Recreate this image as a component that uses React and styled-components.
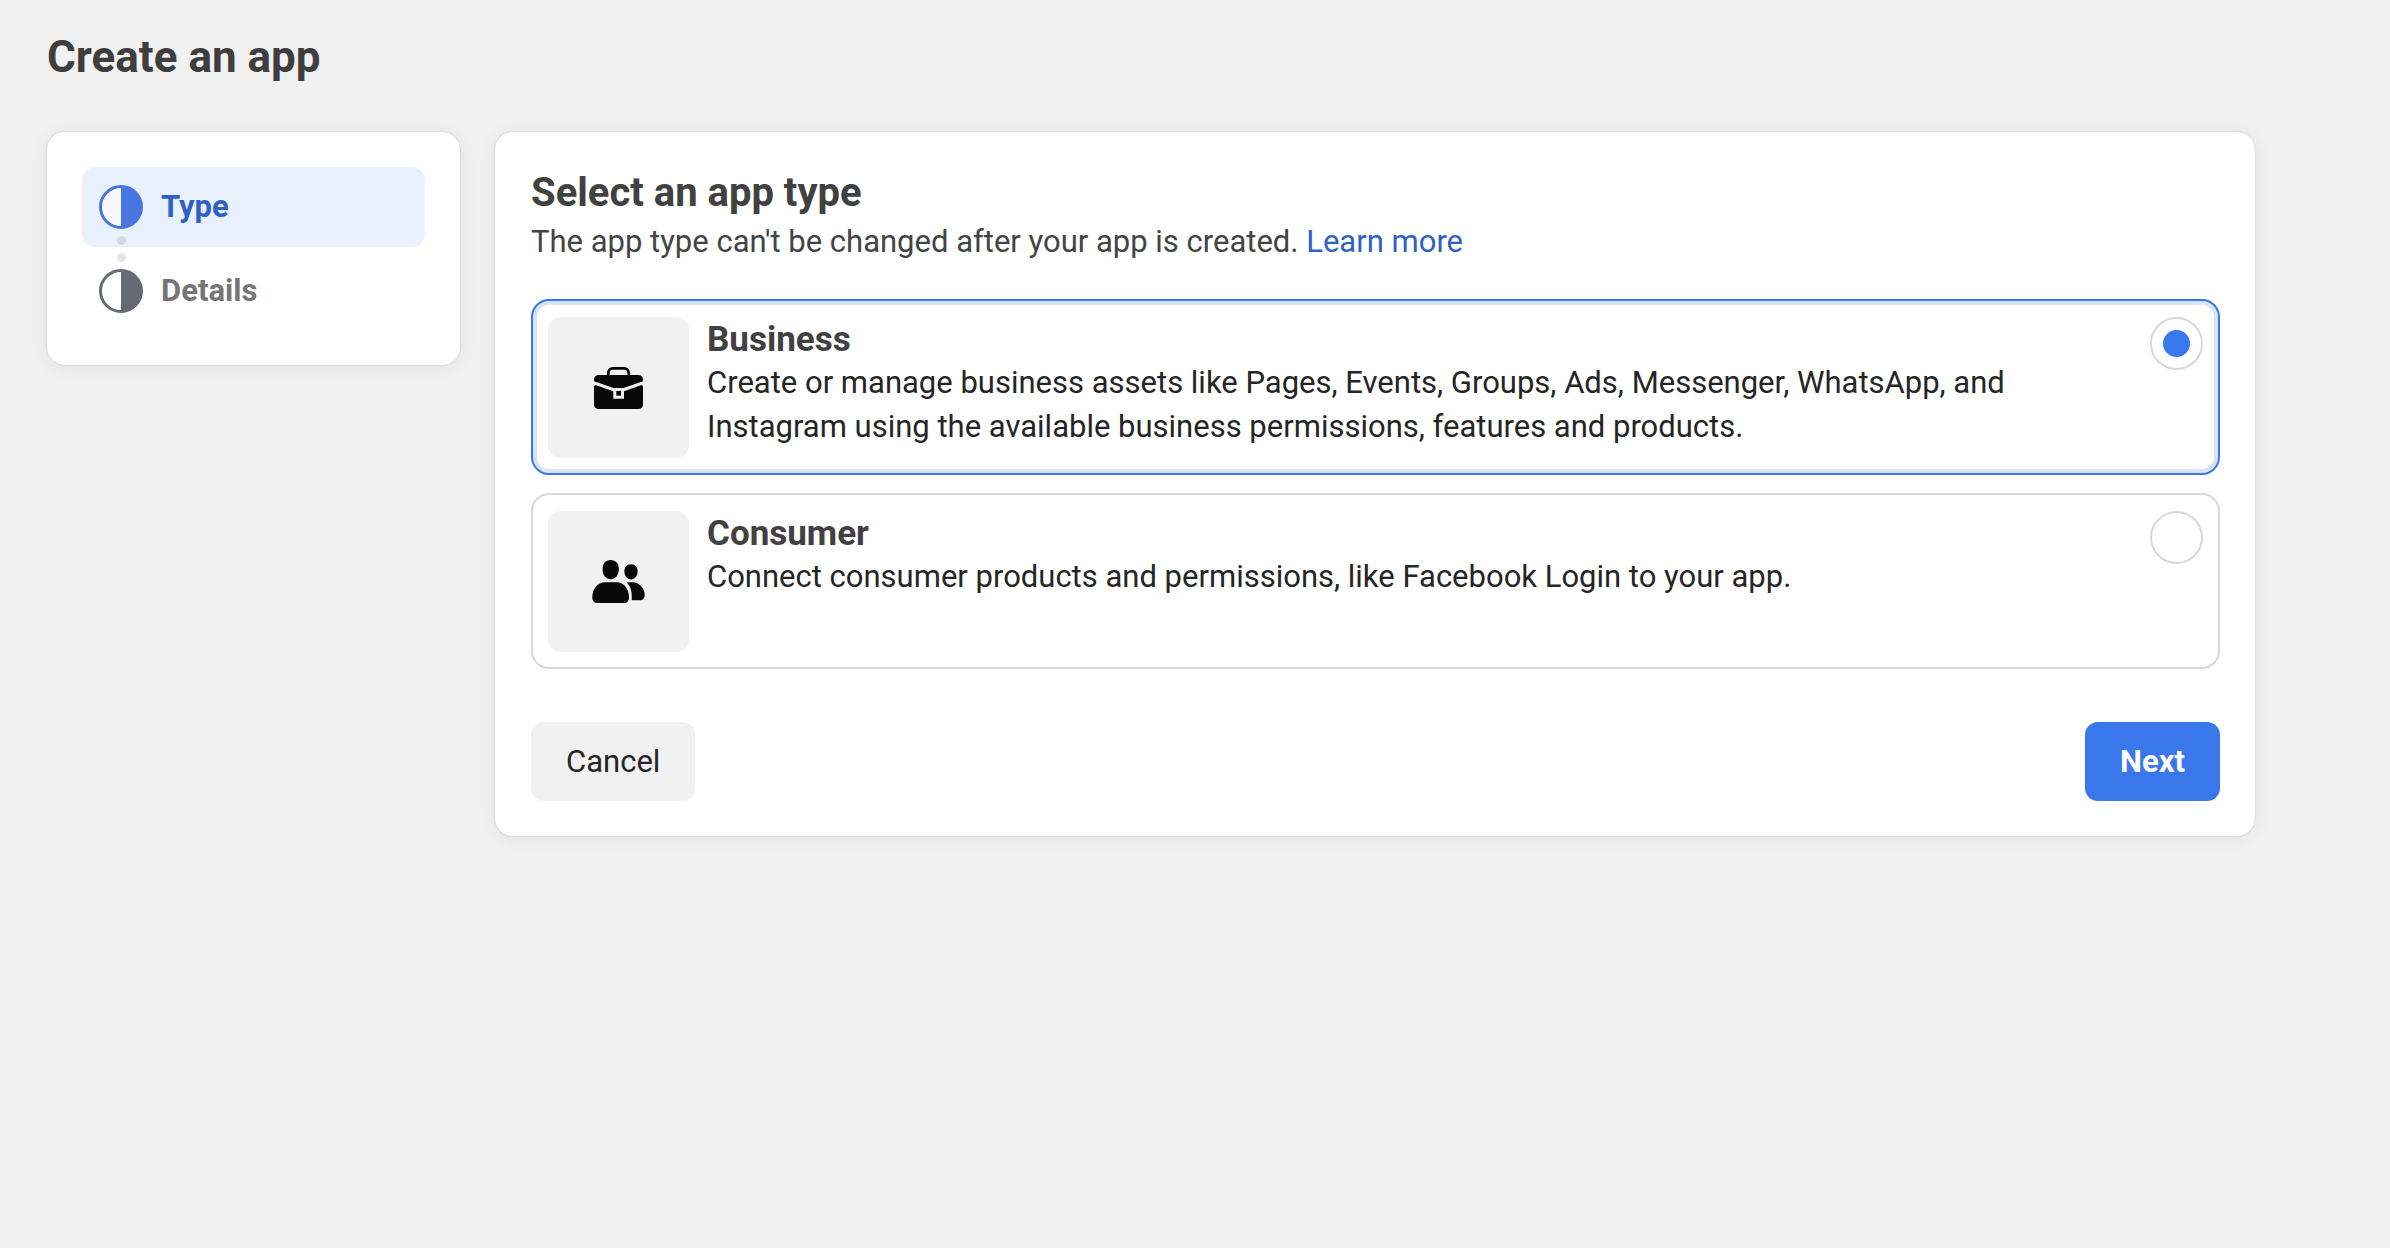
import React, { useState } from "react";
import styled, { createGlobalStyle } from "styled-components";

const GlobalStyle = createGlobalStyle`
  *, *::before, *::after { box-sizing: border-box; }
  body {
    margin: 0;
    background: #f1f1f1;
    color: #252525;
    font-family: Roboto, "Liberation Sans", sans-serif;
    font-size: 31px;
    line-height: 44px;
  }
`;

const Page = styled.div`
  min-height: 100vh;
  padding: 33px 47px;
`;

const PageTitle = styled.h1`
  margin: 0 0 51px;
  font-size: 44px;
  line-height: 48px;
  font-weight: 700;
  color: #3e3e3e;
`;

const Columns = styled.div`
  display: flex;
  align-items: flex-start;
  gap: 35px;
`;

const Card = styled.div`
  background: #fff;
  border-radius: 18px;
  box-shadow: 0 0 2px rgba(0, 0, 0, 0.16), 0 2px 18px rgba(0, 0, 0, 0.07);
`;

const Sidebar = styled(Card).attrs({ as: "nav" })`
  flex: 0 0 413px;
  padding: 35px 35px 34px;
`;

const Steps = styled.ol`
  display: grid;
  gap: 4px;
  margin: 0;
  padding: 0;
  list-style: none;
`;

const Step = styled.li`
  position: relative;
  display: flex;
  align-items: center;
  gap: 18px;
  height: 80px;
  padding: 0 17px;
  border-radius: 13px;
  font-weight: 700;
  background: ${(p) => (p.$active ? "#eaf1fe" : "transparent")};
  color: ${(p) => (p.$active ? "#2e60c8" : "#757575")};
`;

const Connector = styled.span`
  position: absolute;
  z-index: 1;
  top: 69px;
  left: 35px;
  display: grid;
  gap: 8px;
`;

const Dot = styled.span`
  width: 9px;
  height: 9px;
  border-radius: 50%;
  background: rgba(0, 0, 0, 0.1);
`;

const Main = styled(Card).attrs({ as: "main" })`
  flex: 1;
  max-width: 1760px;
  padding: 36px 35px 35px 36px;
`;

const SectionTitle = styled.h2`
  margin: 0 0 2px;
  font-size: 40px;
  line-height: 50px;
  font-weight: 700;
  color: #414141;
`;

const Intro = styled.p`
  margin: 0 0 35px;
  color: #444;
`;

const Link = styled.a`
  color: #2e60c8;
  text-decoration: none;
`;

const Options = styled.div`
  display: grid;
  gap: 18px;
`;

const Option = styled.label`
  display: flex;
  align-items: flex-start;
  gap: 18px;
  padding: 16px 15px 15px;
  border: 2px solid ${(p) => (p.$selected ? "#3a77ea" : "#d8d8d8")};
  border-radius: 18px;
  box-shadow: ${(p) => (p.$selected ? "inset 0 0 0 4px #d8e4fb" : "none")};
  cursor: pointer;
`;

const Tile = styled.span`
  flex: none;
  display: grid;
  place-items: center;
  width: 141px;
  height: 141px;
  border-radius: 13px;
  background: #f1f1f1;
  color: #080808;

  svg { display: block; }
`;

const OptionText = styled.span`
  flex: 1;
  display: block;
  padding-top: 2px;
`;

const OptionTitle = styled.span`
  display: block;
  font-size: 35px;
  line-height: 42px;
  font-weight: 700;
  color: #414141;
`;

const Description = styled.span`
  display: block;
`;

const Radio = styled.input`
  appearance: none;
  flex: none;
  display: grid;
  place-content: center;
  width: 53px;
  height: 53px;
  margin: 0;
  border: 2px solid #d8d8d8;
  border-radius: 50%;
  background: #fff;
  cursor: pointer;

  &:checked::before {
    content: "";
    width: 27px;
    height: 27px;
    border-radius: 50%;
    background: #3a77ea;
  }
`;

const Actions = styled.div`
  display: flex;
  justify-content: space-between;
  margin-top: 53px;
`;

const Button = styled.button`
  height: 79px;
  padding: 0 35px;
  border: 0;
  border-radius: 13px;
  font: inherit;
  font-weight: ${(p) => (p.$primary ? 700 : 400)};
  background: ${(p) => (p.$primary ? "#3a77ea" : "#f1f1f1")};
  color: ${(p) => (p.$primary ? "#fff" : "#252525")};
  cursor: pointer;
`;

function HalfCircleIcon({ color }) {
  return (
    <svg width="44" height="44" viewBox="0 0 44 44" aria-hidden="true">
      <circle cx="22" cy="22" r="20.5" fill="#fff" fillOpacity="0.5" stroke={color} strokeWidth="3" />
      <path d="M22 1a21 21 0 0 1 0 42z" fill={color} />
    </svg>
  );
}

function BriefcaseIcon() {
  return (
    <svg width="49" height="42" viewBox="0 0 49 42" fill="currentColor" aria-hidden="true">
      <path d="M14.3 9V5.8a4.4 4.4 0 0 1 4.4-4.4h11.6a4.4 4.4 0 0 1 4.4 4.4V9" fill="none" stroke="currentColor" strokeWidth="2.8" />
      <path d="M4.5 8h40A4.5 4.5 0 0 1 49 12.500V14.200L29.500 21H19.500L0 14.200V12.500A4.500 4.500 0 0 1 4.500 8z" />
      <path d="M1.400 18L19.300 24.200V31.700H30V24.200L47.600 18Q49 18.400 49 19.800V37.500A4.500 4.500 0 0 1 44.500 42H4.500A4.500 4.500 0 0 1 0 37.500V19.800Q0 18.400 1.400 18z" />
      <path d="M22.300 24h4.700v4.700h-4.700z" />
    </svg>
  );
}

function PeopleIcon() {
  return (
    <svg width="53" height="43" viewBox="0 0 53 43" fill="currentColor" aria-hidden="true">
      <path d="M18.700 0C24 0 26.800 3.600 26.800 9C26.800 15 23.400 19.300 18.700 19.300S10.600 15 10.600 9C10.600 3.600 13.400 0 18.700 0z" />
      <path d="M39 4.300C43.200 4.300 45.600 7.200 45.600 11.300C45.600 16 42.800 19.400 39 19.400S32.400 16 32.400 11.300C32.400 7.200 34.800 4.300 39 4.300z" />
      <path d="M13 22.300H24.500C32 22.300 37 29 37 37.500C37 41 35.300 43 32 43H5.300C2 43 .3 41 .3 37.500C.3 29 5.500 22.300 13 22.300z" />
      <path d="M34.700 22.600C36 22.300 38 22.300 40 22.300C47.500 22.300 52.700 28.500 52.700 35C52.700 38.300 50.700 40.300 47.500 40.300H39.700C40.200 33 39.200 27 34.700 22.600z" />
    </svg>
  );
}

const steps = [
  { label: "Type", color: "#4876df", active: true },
  { label: "Details", color: "#656a73", active: false },
];

const appTypes = [
  {
    id: "business",
    title: "Business",
    text: "Create or manage business assets like Pages, Events, Groups, Ads, Messenger, WhatsApp, and Instagram using the available business permissions, features and products.",
    Icon: BriefcaseIcon,
  },
  {
    id: "consumer",
    title: "Consumer",
    text: "Connect consumer products and permissions, like Facebook Login to your app.",
    Icon: PeopleIcon,
  },
];

export default function App() {
  const [selected, setSelected] = useState("business");

  return (
    <Page>
      <GlobalStyle />
      <PageTitle>Create an app</PageTitle>
      <Columns>
        <Sidebar>
          <Steps>
            {steps.map((step, i) => (
              <Step key={step.label} $active={step.active} aria-current={step.active ? "step" : undefined}>
                <HalfCircleIcon color={step.color} />
                {step.label}
                {i < steps.length - 1 && (
                  <Connector>
                    <Dot />
                    <Dot />
                  </Connector>
                )}
              </Step>
            ))}
          </Steps>
        </Sidebar>
        <Main>
          <SectionTitle>Select an app type</SectionTitle>
          <Intro>
            The app type can't be changed after your app is created. <Link href="#learn-more">Learn more</Link>
          </Intro>
          <Options role="radiogroup">
            {appTypes.map(({ id, title, text, Icon }) => (
              <Option key={id} htmlFor={id} $selected={selected === id}>
                <Tile>
                  <Icon />
                </Tile>
                <OptionText>
                  <OptionTitle>{title}</OptionTitle>
                  <Description>{text}</Description>
                </OptionText>
                <Radio
                  type="radio"
                  id={id}
                  name="app-type"
                  value={id}
                  checked={selected === id}
                  onChange={() => setSelected(id)}
                />
              </Option>
            ))}
          </Options>
          <Actions>
            <Button type="button">Cancel</Button>
            <Button type="button" $primary>
              Next
            </Button>
          </Actions>
        </Main>
      </Columns>
    </Page>
  );
}
